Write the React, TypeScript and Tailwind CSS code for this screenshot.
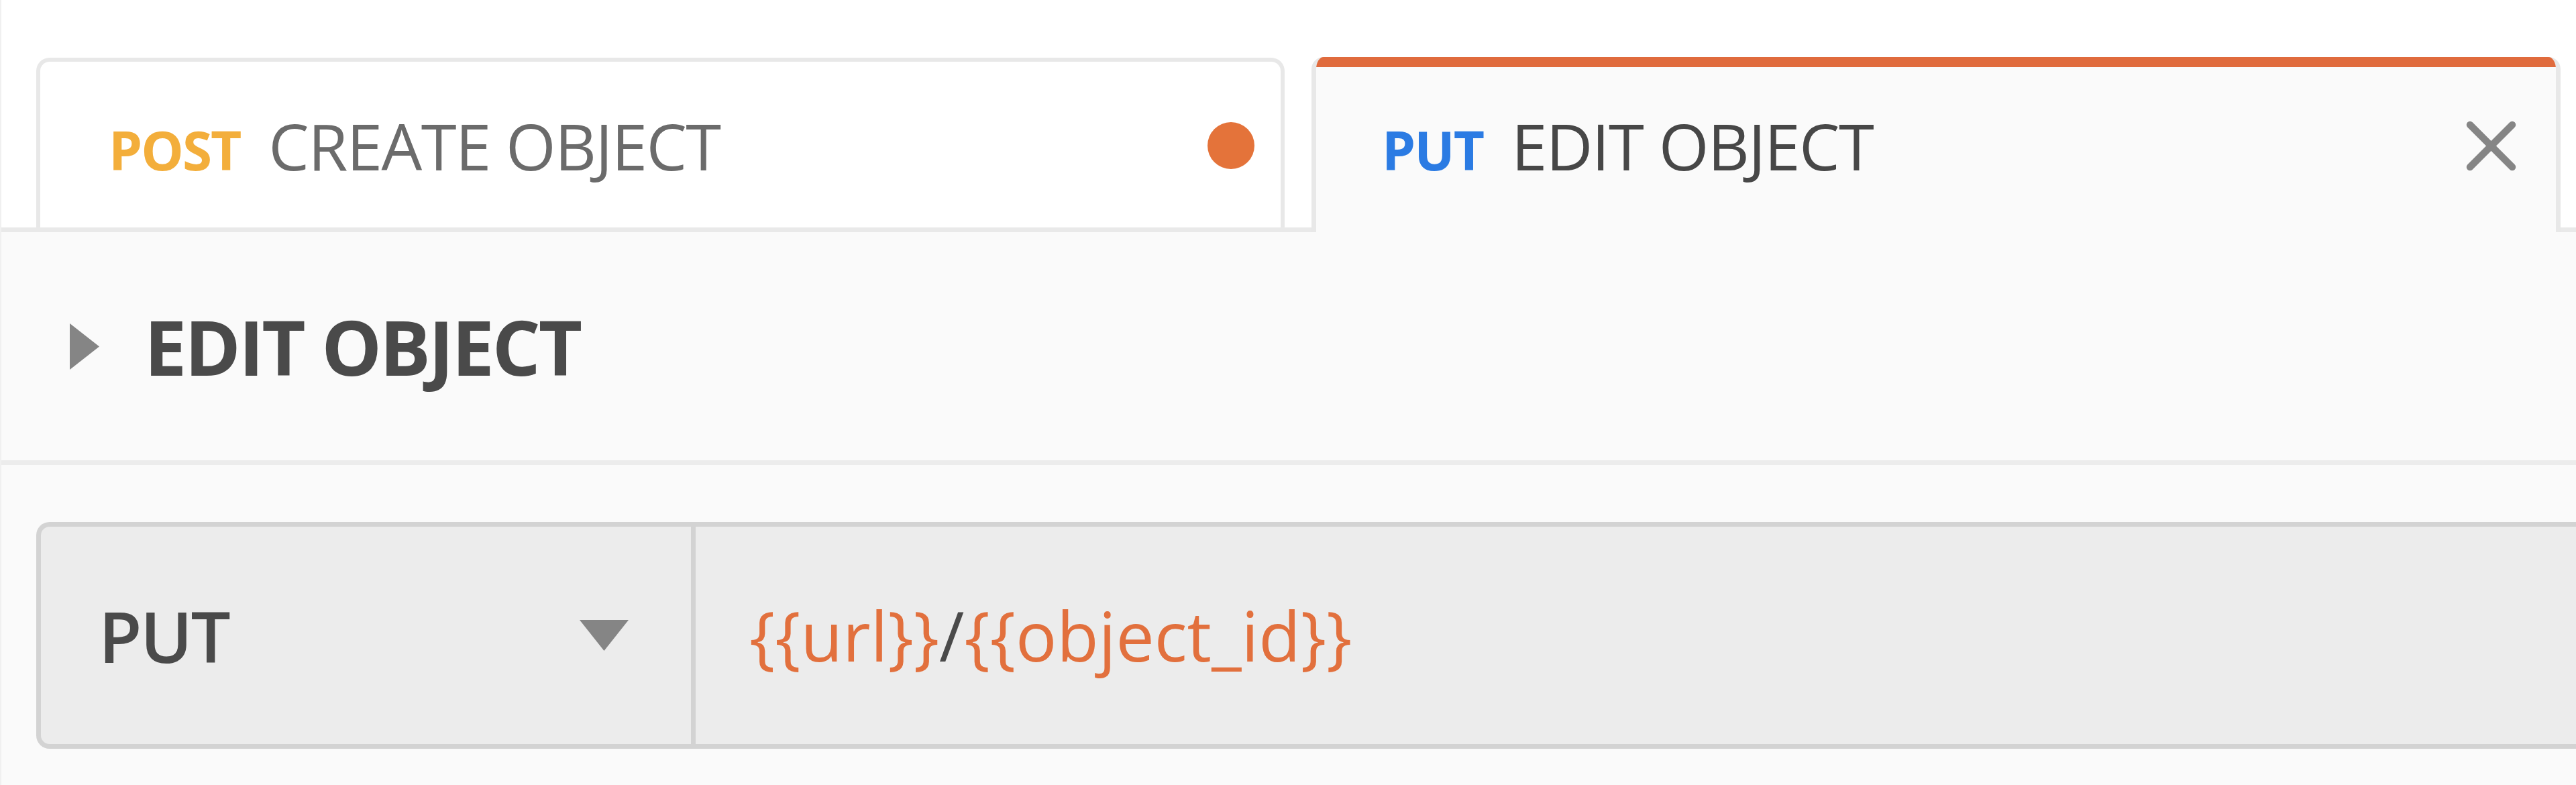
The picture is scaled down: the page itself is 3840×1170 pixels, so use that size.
/**
 * Request tabs + request header (Postman-like)
 */

const font = "font-['Open_Sans','Noto_Sans',sans-serif]";

function Tabs() {
  return (
    <div className="flex h-[346px] gap-[40px] border-b-[7px] border-[#e9e9e9] pl-[52px] pt-[85px]">
      {/* inactive tab */}
      <div className="mt-px flex w-[1861px] items-center rounded-t-[20px] border-[6px] border-b-0 border-[#e8e8e8] bg-white pl-[102px] pr-[39px] pt-[3px]">
        <div className="flex items-baseline">
          <span className="text-[80px] font-bold leading-none tracking-[-2px] text-[#f3ae3b]">POST</span>
          <span className="ml-[42px] text-[96px] leading-none tracking-[-1.6px] text-[#6b6b6b]">CREATE OBJECT</span>
        </div>
        <div className="ml-auto h-[70px] w-[70px] rounded-full bg-[#e4733a]" />
      </div>

      {/* active tab */}
      <div className="relative z-10 -mb-[7px] flex w-[1862px] flex-col overflow-hidden rounded-t-[18px] border-x-[7px] border-[#e8e8e8] bg-[#fafafa]">
        <div className="h-[15px] shrink-0 bg-[#e06b3d]" />
        <div className="flex flex-1 items-center pb-[12px] pl-[98px] pr-[58px]">
          <div className="flex items-baseline">
            <span className="text-[80px] font-bold leading-none tracking-[-2px] text-[#2b7be3]">PUT</span>
            <span className="ml-[42px] text-[96px] leading-none tracking-[-1.6px] text-[#474747]">EDIT OBJECT</span>
          </div>
          <svg className="ml-auto" width="77" height="77" viewBox="0 0 77 77">
            <path d="M7 7 L70 70 M70 7 L7 70" stroke="#858585" strokeWidth="10.5" strokeLinecap="round" />
          </svg>
        </div>
      </div>
    </div>
  );
}

function TitleRow() {
  return (
    <div className="flex h-[347px] items-center border-b-[7px] border-[#ececec] bg-[#fafafa] pl-[102px]">
      <svg width="44" height="69" viewBox="0 0 44 69">
        <path d="M0 0 L44 34.5 L0 69 Z" fill="#858585" />
      </svg>
      <span className="ml-[67px] text-[113px] font-bold leading-none tracking-[-3px] text-[#4a4a4a]">EDIT OBJECT</span>
    </div>
  );
}

function UrlBar() {
  return (
    <div className="h-[477px] bg-[#fafafa] pl-[52px] pt-[85px]">
      <div className="flex h-[338px] rounded-l-[20px] border-y-[7px] border-l-[7px] border-[#d3d3d3] bg-[#ececec]">
        <div className="flex w-[976px] shrink-0 items-center border-r-[7px] border-[#d3d3d3] pl-[86px] pr-[93px]">
          <span className="text-[105px] font-semibold leading-none tracking-[-2.5px] text-[#4a4a4a]">PUT</span>
          <svg className="ml-auto" width="73" height="46" viewBox="0 0 73 46">
            <path d="M0 0 L73 0 L36.5 46 Z" fill="#858585" />
          </svg>
        </div>
        <div className="flex flex-1 items-center pl-[80px]">
          <span className="text-[102px] leading-none text-[#e2703d]">
            {'{{url}}'}
            <span className="text-[#4a4a4a]">/</span>
            {'{{object_id}}'}
          </span>
        </div>
      </div>
    </div>
  );
}

export default function App() {
  return (
    <div className={`h-[1170px] w-[3840px] overflow-hidden border-l-[2px] border-[#f0f0f0] bg-white ${font}`}>
      <Tabs />
      <TitleRow />
      <UrlBar />
    </div>
  );
}
